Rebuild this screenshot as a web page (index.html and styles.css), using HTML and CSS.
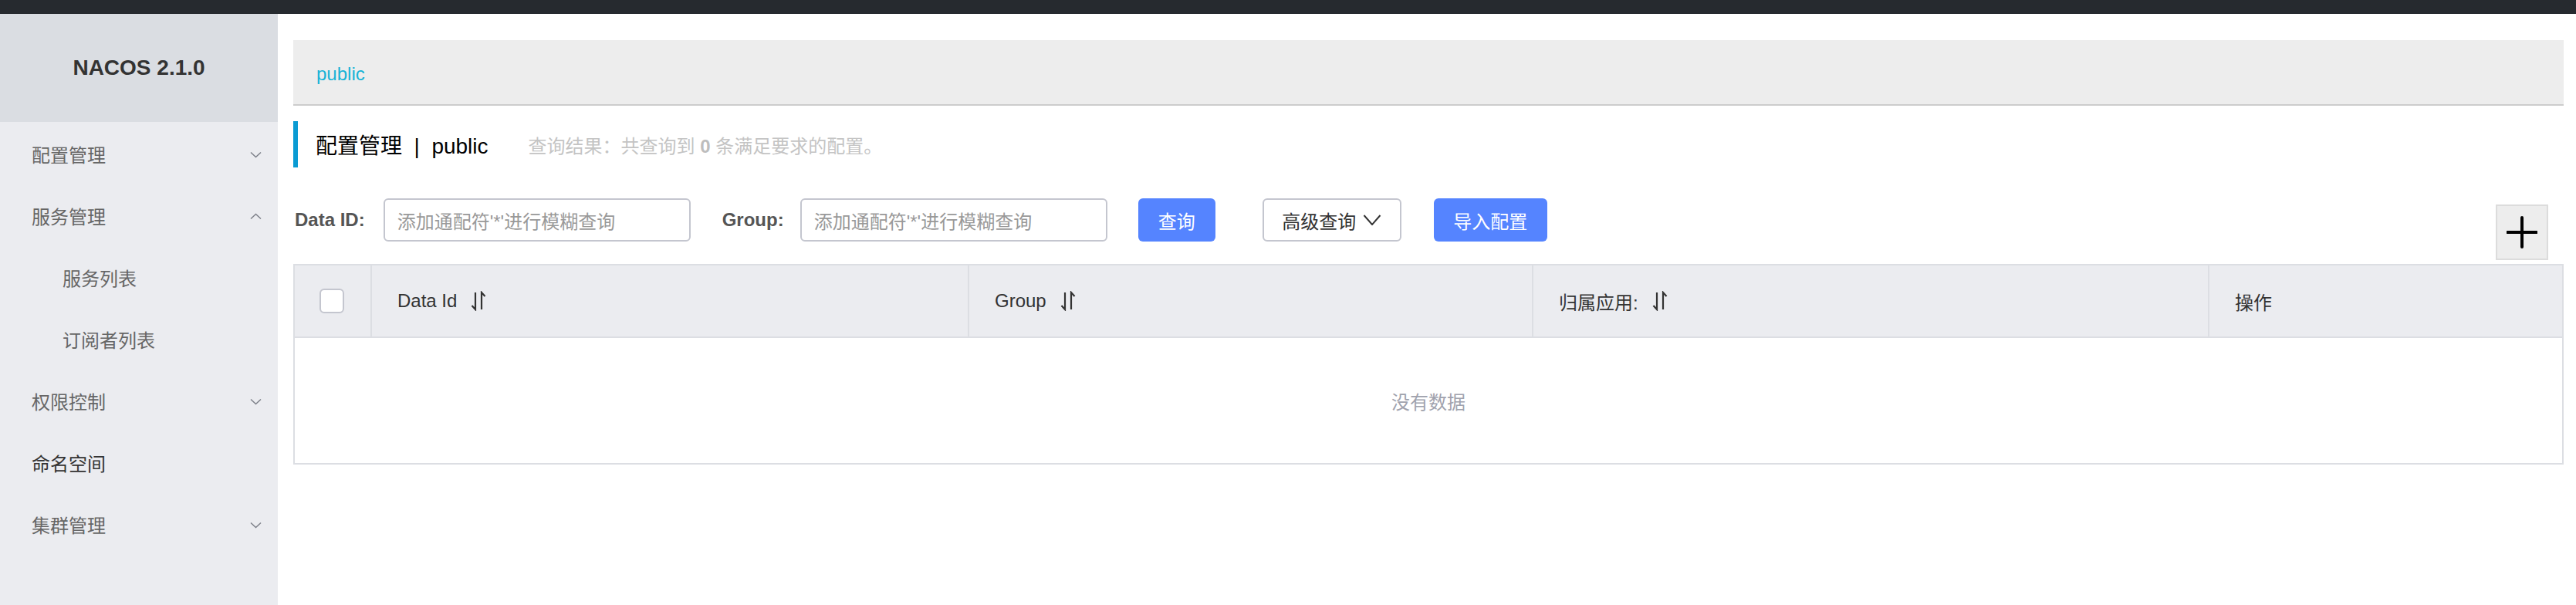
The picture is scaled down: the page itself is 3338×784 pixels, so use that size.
FILE: index.html
```html
<!DOCTYPE html>
<html lang="zh-CN">
<head>
<meta charset="utf-8">
<title>Nacos</title>
<link rel="stylesheet" href="styles.css">
</head>
<body>
<div class="topbar"></div>
<div class="layout">
  <aside class="sidebar">
    <div class="logo">NACOS 2.1.0</div>
    <ul class="menu">
      <li class="menu-item">
        <span>配置管理</span>
        <svg class="chev" width="15" height="9" viewBox="0 0 15 9"><path d="M1 1.5 L7.5 7.5 L14 1.5" fill="none" stroke="#7d8089" stroke-width="1.5"/></svg>
      </li>
      <li class="menu-item">
        <span>服务管理</span>
        <svg class="chev" width="15" height="9" viewBox="0 0 15 9"><path d="M1 7.5 L7.5 1.5 L14 7.5" fill="none" stroke="#7d8089" stroke-width="1.5"/></svg>
      </li>
      <li class="menu-item sub"><span>服务列表</span></li>
      <li class="menu-item sub"><span>订阅者列表</span></li>
      <li class="menu-item">
        <span>权限控制</span>
        <svg class="chev" width="15" height="9" viewBox="0 0 15 9"><path d="M1 1.5 L7.5 7.5 L14 1.5" fill="none" stroke="#7d8089" stroke-width="1.5"/></svg>
      </li>
      <li class="menu-item active"><span>命名空间</span></li>
      <li class="menu-item">
        <span>集群管理</span>
        <svg class="chev" width="15" height="9" viewBox="0 0 15 9"><path d="M1 1.5 L7.5 7.5 L14 1.5" fill="none" stroke="#7d8089" stroke-width="1.5"/></svg>
      </li>
    </ul>
  </aside>
  <main class="main">
    <div class="breadcrumb"><span class="ns-link">public</span></div>
    <div class="title-row">
      <span class="title">配置管理 &nbsp;|&nbsp; public</span>
      <span class="summary">查询结果：共查询到 <b>0</b> 条满足要求的配置。</span>
    </div>
    <div class="filter-row">
      <label class="flabel">Data ID:</label>
      <div class="finput">添加通配符'*'进行模糊查询</div>
      <label class="flabel flabel-group">Group:</label>
      <div class="finput">添加通配符'*'进行模糊查询</div>
      <button class="btn primary btn-query">查询</button>
      <button class="btn normal btn-adv">高级查询
        <svg width="24" height="14" viewBox="0 0 24 14"><path d="M1.5 1 L12 13 L22.5 1" fill="none" stroke="#333" stroke-width="2"/></svg>
      </button>
      <button class="btn primary btn-import">导入配置</button>
      <div class="plus-btn">
        <svg width="40" height="42" viewBox="0 0 40 42"><path d="M20 2 V40 M1 21 H39" stroke="#000" stroke-width="4" stroke-linecap="round"/></svg>
      </div>
    </div>
    <div class="table">
      <div class="thead">
        <div class="th c1"><span class="checkbox"></span></div>
        <div class="th c2">Data Id
          <svg class="sort" width="20" height="26" viewBox="0 0 20 26"><path d="M6 2 V24 L1.5 19 M14 24 V2 L18.5 7" fill="none" stroke="#333" stroke-width="2.2"/></svg>
        </div>
        <div class="th c3">Group
          <svg class="sort" width="20" height="26" viewBox="0 0 20 26"><path d="M6 2 V24 L1.5 19 M14 24 V2 L18.5 7" fill="none" stroke="#333" stroke-width="2.2"/></svg>
        </div>
        <div class="th c4">归属应用:
          <svg class="sort" width="20" height="26" viewBox="0 0 20 26"><path d="M6 2 V24 L1.5 19 M14 24 V2 L18.5 7" fill="none" stroke="#333" stroke-width="2.2"/></svg>
        </div>
        <div class="th c5">操作</div>
      </div>
      <div class="tbody">没有数据</div>
    </div>
  </main>
</div>
</body>
</html>
```
FILE: styles.css
```css
* { box-sizing: border-box; }
html, body {
  margin: 0;
  padding: 0;
  background: #fff;
  font-family: "Liberation Sans", "Noto Sans CJK SC", sans-serif;
  height: 784px;
  overflow: hidden;
}
.topbar {
  height: 18px;
  background: #262a2f;
}
.layout {
  display: flex;
  height: 766px;
}
.sidebar {
  width: 360px;
  flex: none;
  background: #ebecf0;
}
.logo {
  height: 140px;
  background: #dadde2;
  display: flex;
  align-items: center;
  justify-content: center;
  font-size: 28px;
  font-weight: bold;
  color: #333;
}
.menu {
  list-style: none;
  margin: 0;
  padding: 4px 0 0 0;
}
.menu-item {
  height: 80px;
  display: flex;
  align-items: center;
  justify-content: space-between;
  padding: 0 21px 0 41px;
  font-size: 24px;
  color: #666;
  line-height: 1;
}
.menu-item.sub { padding-left: 81px; }
.menu-item.active { color: #333; }
.chev { flex: none; margin-top: -4px; }

.main {
  flex: 1;
  padding: 34px 16px 0 20px;
  min-width: 0;
}
.breadcrumb {
  height: 85px;
  background: #ededed;
  border-bottom: 2px solid #cccccc;
  display: flex;
  align-items: center;
  padding-left: 30px;
  padding-top: 4px;
}
.ns-link {
  font-size: 24px;
  color: #17b3d6;
}
.title-row {
  margin-top: 20px;
  height: 60px;
  border-left: 6px solid #0a9bd3;
  display: flex;
  align-items: center;
  padding-left: 23px;
}
.title {
  font-size: 28px;
  color: #000;
  white-space: pre;
}
.summary {
  margin-left: 52px;
  font-size: 24px;
  color: #c4c4c4;
}
.summary b { color: #bdbdbd; }

.filter-row {
  margin-top: 40px;
  height: 56px;
  display: flex;
  align-items: center;
}
.flabel {
  font-size: 24px;
  font-weight: bold;
  color: #555;
  margin-left: 2px;
  margin-right: 24px;
}
.flabel-group { margin-left: 0; margin-right: 21px; }
.finput {
  width: 398px;
  height: 56px;
  border: 2px solid #c4c6cf;
  border-radius: 6px;
  font-size: 24px;
  color: #999;
  padding-left: 16px;
  display: flex;
  align-items: center;
  margin-right: 41px;
}
.btn {
  height: 56px;
  border-radius: 6px;
  font-family: inherit;
  font-size: 24px;
  display: flex;
  align-items: center;
  justify-content: center;
  padding: 0;
  cursor: pointer;
}
.btn.primary {
  background: #5584ff;
  border: none;
  color: #fff;
}
.btn.normal {
  background: #fff;
  border: 2px solid #c4c6cf;
  color: #333;
}
.btn-query { width: 100px; margin-left: -1px; }
.btn-adv { width: 180px; margin-left: 61px; gap: 9px; }
.btn-import { width: 147px; margin-left: 42px; }
.plus-btn {
  margin-left: auto;
  margin-right: 20px;
  align-self: flex-start;
  margin-top: 8px;
  margin-bottom: -24px;
  width: 68px;
  height: 72px;
  background: #ededed;
  border: 2px solid #dcdcdc;
  display: flex;
  align-items: center;
  justify-content: center;
  position: relative;
  z-index: 1;
}

.table {
  margin-top: 29px;
  border: 2px solid #dcdee3;
}
.thead {
  display: flex;
  height: 94px;
  background: #ebecf0;
  border-bottom: 2px solid #dcdee3;
}
.th {
  display: flex;
  align-items: center;
  font-size: 24px;
  color: #333;
  padding-left: 33px;
  gap: 18px;
}
.th + .th { border-left: 2px solid #dcdee3; }
.c1 { width: 98px; padding-left: 32px; }
.c2 { width: 774px; }
.c3 { width: 731px; }
.c4 { width: 876px; }
.c5 { flex: 1; }
.sort { flex: none; }
.checkbox {
  display: block;
  width: 32px;
  height: 32px;
  background: #fff;
  border: 2px solid #c4c6cf;
  border-radius: 6px;
}
.tbody {
  height: 162px;
  display: flex;
  align-items: center;
  justify-content: center;
  font-size: 24px;
  color: #a0a2ad;
}
```
